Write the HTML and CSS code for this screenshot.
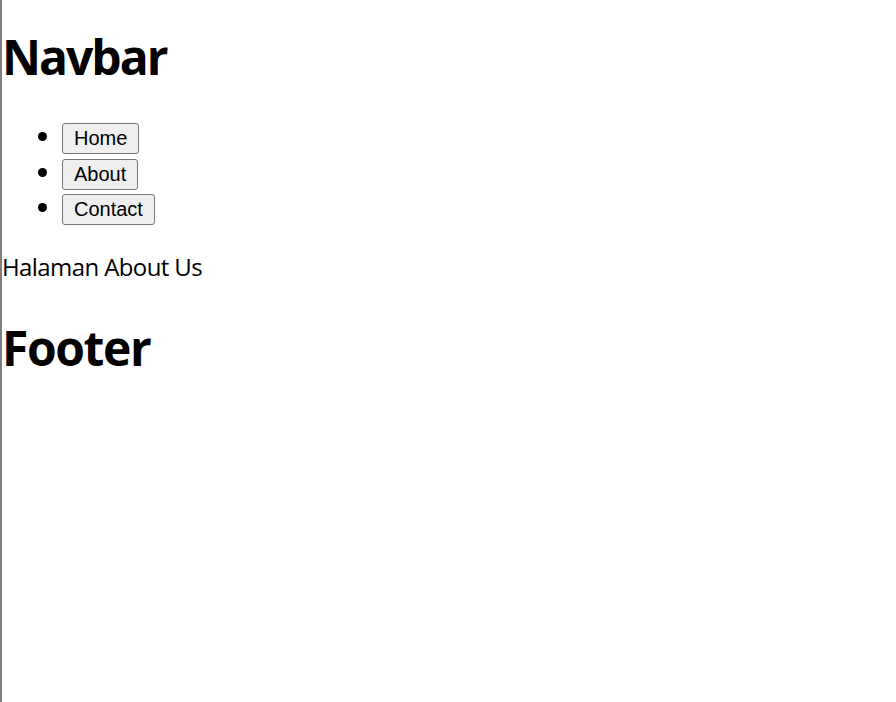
FILE: index.html
```html
<!DOCTYPE html>
<html lang="id">
<head>
<meta charset="utf-8">
<title>Halaman About</title>
<link rel="stylesheet" href="styles.css">
</head>
<body>
<h1 class="title">Navbar</h1>
<ul class="nav">
  <li><button class="nav-btn">Home</button></li>
  <li><button class="nav-btn">About</button></li>
  <li><button class="nav-btn">Contact</button></li>
</ul>
<p class="content">Halaman About Us</p>
<h1 class="title footer">Footer</h1>
</body>
</html>
```
FILE: styles.css
```css
html, body {
  margin: 0;
  padding: 0;
  background: #ffffff;
}
body {
  border-left: 2px solid #7f7f7f;
  min-height: 702px;
  box-sizing: border-box;
  font-family: "Open Sans", "Noto Sans", sans-serif;
  color: #000;
}
.title {
  font-size: 48px;
  line-height: 64px;
  font-weight: 700;
  letter-spacing: -2px;
  margin: 25px 0 0 0;
}
.nav {
  margin: 31px 0 0 0;
  padding-left: 60px;
  font-size: 24px;
  line-height: 31px;
}
.nav li {
  height: 35.5px;
}
.nav-btn {
  font-family: "Liberation Sans", Arial, sans-serif;
  font-size: 20px;
  line-height: 23px;
  height: 31px;
  box-sizing: border-box;
  padding: 3px 11px;
  border: 1px solid #767676;
  border-radius: 3px;
  background: #efefef;
  color: #000;
  margin: 0;
  vertical-align: baseline;
}
.content {
  font-size: 24px;
  line-height: 32px;
  letter-spacing: -0.6px;
  margin: 24px 0 0 0;
}
.footer {
  letter-spacing: -1.4px;
  margin-top: 33px;
}
```
